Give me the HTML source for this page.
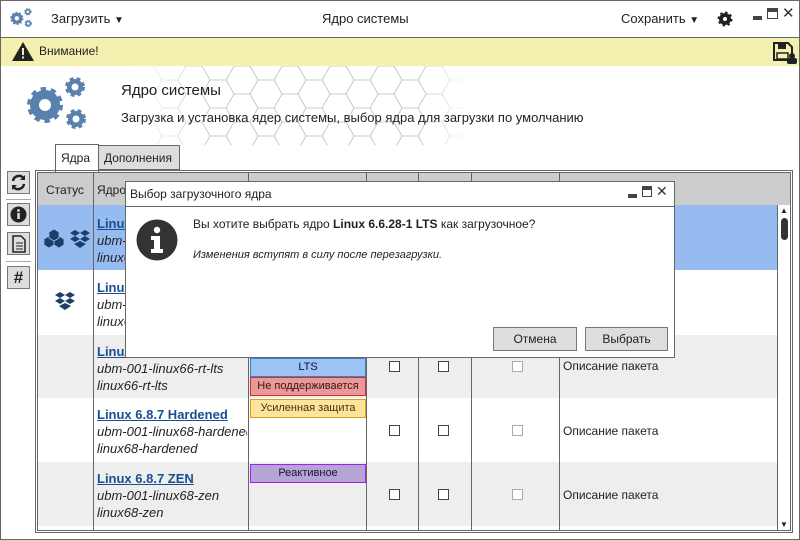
<!DOCTYPE html>
<html><head><meta charset="utf-8"><style>
*{box-sizing:border-box;margin:0;padding:0}
body{width:800px;height:540px;position:relative;overflow:hidden;background:#fff;font-family:"Liberation Sans","DejaVu Sans",sans-serif;font-size:13px;color:#222}
.a{position:absolute}
.hl{position:absolute;background:#666}
.link{color:#1a4f8f;font-weight:bold;text-decoration:underline}
.it{font-style:italic;color:#222}
.badge{position:absolute;left:250px;width:116px;height:19px;font-size:11px;text-align:center;line-height:17px;border:1px solid}
.cb{position:absolute;width:11px;height:11px;border:1px solid #444;background:#fff}
.cb.g{border-color:#aaa}
.btn{position:absolute;background:#ddd;border:1px solid #777;text-align:center;line-height:22px;font-size:13px}
.sb{position:absolute;left:7px;width:23px;height:23px;border:1px solid #777;background:#ddd}
</style></head><body>
<div class="a" style="left:0;top:0;width:800px;height:540px;border:1px solid #666"></div>
<!-- top bar -->
<svg class="a" style="left:9px;top:7px" width="26" height="22" viewBox="0 0 66 60"><g fill="#5a80ad"><circle cx="19" cy="31" r="15" stroke="#5a80ad" stroke-width="6" stroke-dasharray="5 4.5"/><circle cx="49" cy="13" r="8" stroke="#5a80ad" stroke-width="4" stroke-dasharray="3.5 3"/><circle cx="50" cy="45" r="8" stroke="#5a80ad" stroke-width="4" stroke-dasharray="3.5 3"/></g><g fill="#fff"><circle cx="19" cy="31" r="6"/><circle cx="49" cy="13" r="3.5"/><circle cx="50" cy="45" r="3.5"/></g></svg>
<div class="a" style="left:51px;top:11px">Загрузить <span style="font-size:10px">▼</span></div>
<div class="a" style="left:322px;top:11px">Ядро системы</div>
<div class="a" style="left:621px;top:11px">Сохранить <span style="font-size:10px">▼</span></div>
<svg class="a" style="left:717px;top:11px" width="16" height="16" viewBox="0 0 16 16"><circle cx="8" cy="8" r="6" fill="#222" stroke="#222" stroke-width="3" stroke-dasharray="2.2 2.5"/><circle cx="8" cy="8" r="2" fill="#fff"/></svg>
<div class="a" style="left:753px;top:16px;width:9px;height:4px;background:#444"></div>
<div class="a" style="left:767px;top:8px;width:11px;height:11px;border:1.5px solid #444;border-top-width:4px"></div>
<div class="a" style="left:782px;top:4px;font-size:15px;color:#333">✕</div>
<div class="hl" style="left:0;top:37px;width:800px;height:1px"></div>
<!-- warning bar -->
<div class="a" style="left:1px;top:38px;width:798px;height:28px;background:#f3f0b0"></div>
<svg class="a" style="left:11px;top:41px" width="24" height="21" viewBox="0 0 24 21"><path d="M12 1L23 20H1Z" fill="#222"/><rect x="11" y="7" width="2" height="7" fill="#f3f0b0"/><rect x="11" y="15.5" width="2" height="2" fill="#f3f0b0"/></svg>
<div class="a" style="left:39px;top:44px;font-size:12px">Внимание!</div>
<svg class="a" style="left:773px;top:42px" width="24" height="22" viewBox="0 0 24 22"><path d="M1 1H15L19 5V18H1Z" fill="none" stroke="#222" stroke-width="2"/><rect x="5" y="2" width="8" height="5" fill="#222"/><rect x="4" y="11" width="11" height="6" fill="none" stroke="#222" stroke-width="1.5"/><circle cx="19" cy="14" r="3" fill="#222"/><rect x="14" y="16" width="10" height="6" rx="2" fill="#222"/></svg>
<!-- header -->
<svg class="a" style="left:130px;top:66px" width="340" height="79">
<defs><pattern id="hx" width="48" height="28" patternUnits="userSpaceOnUse"><path d="M0 14L8 0H24L32 14L24 28H8Z M32 14H48" fill="none" stroke="#bbb" stroke-width="0.8"/></pattern>
<linearGradient id="fd" x1="0" x2="1"><stop offset="0" stop-color="#fff" stop-opacity="1"/><stop offset="0.25" stop-color="#fff" stop-opacity="0"/><stop offset="0.85" stop-color="#fff" stop-opacity="0"/><stop offset="1" stop-color="#fff" stop-opacity="1"/></linearGradient></defs>
<rect width="340" height="79" fill="url(#hx)"/><rect width="340" height="79" fill="url(#fd)"/></svg>
<svg class="a" style="left:26px;top:74px" width="66" height="60" viewBox="0 0 66 60"><g fill="#5a80ad"><circle cx="19" cy="31" r="15" stroke="#5a80ad" stroke-width="6" stroke-dasharray="5 4.5"/><circle cx="49" cy="13" r="8" stroke="#5a80ad" stroke-width="4" stroke-dasharray="3.5 3"/><circle cx="50" cy="45" r="8" stroke="#5a80ad" stroke-width="4" stroke-dasharray="3.5 3"/></g><g fill="#fff"><circle cx="19" cy="31" r="6"/><circle cx="49" cy="13" r="3.5"/><circle cx="50" cy="45" r="3.5"/></g></svg>
<div class="a" style="left:121px;top:82px;font-size:15px">Ядро системы</div>
<div class="a" style="left:121px;top:110px;font-size:13px">Загрузка и установка ядер системы, выбор ядра для загрузки по умолчанию</div>
<!-- tabs -->
<div class="a" style="left:55px;top:144px;width:44px;height:28px;border:1px solid #666;border-bottom:none;background:#fff;font-size:12px;padding:6px 0 0 5px">Ядра</div>
<div class="a" style="left:98px;top:145px;width:82px;height:25px;border:1px solid #666;background:#ddd;font-size:12px;padding:5px 0 0 5px">Дополнения</div>
<!-- sidebar -->
<div class="sb" style="top:171px"><svg width="21" height="21" viewBox="0 0 21 21"><path d="M5 9a6 6 0 0 1 10.5-3M16 12a6 6 0 0 1-10.5 3" fill="none" stroke="#222" stroke-width="2.5"/><path d="M17 3v5h-5zM4 18v-5h5z" fill="#222"/></svg></div>
<div class="hl" style="left:6px;top:199px;width:25px;height:1px;background:#aaa"></div>
<div class="sb" style="top:203px"><svg width="21" height="21" viewBox="0 0 21 21"><circle cx="10.5" cy="10.5" r="8" fill="#222"/><rect x="9.3" y="9" width="2.5" height="6" fill="#ddd"/><circle cx="10.5" cy="6.5" r="1.4" fill="#ddd"/></svg></div>
<div class="sb" style="top:232px"><svg width="21" height="21" viewBox="0 0 21 21"><path d="M5 3h8l4 4v12H5z" fill="none" stroke="#222" stroke-width="1.5"/><path d="M8 10h7M8 13h7M8 16h7" stroke="#222"/></svg></div>
<div class="hl" style="left:6px;top:261px;width:25px;height:1px;background:#aaa"></div>
<div class="sb" style="top:266px;font-weight:bold;font-size:17px;text-align:center;line-height:21px">#</div>
<!-- table frame -->
<div class="a" style="left:35px;top:170px;width:758px;height:363px;border:1px solid #666"></div>
<div class="a" style="left:37px;top:172px;width:754px;height:359px;border:1px solid #666;background:#fff"></div>
<div class="a" style="left:38px;top:173px;width:752px;height:32px;background:#ccc"></div>
<div class="a" style="left:38px;top:205px;width:739px;height:65px;background:#96bbf0"></div>
<div class="a" style="left:38px;top:335px;width:739px;height:63px;background:#eee"></div>
<div class="a" style="left:38px;top:462px;width:739px;height:64px;background:#eee"></div>
<div class="hl" style="left:93px;top:173px;width:1px;height:357px"></div>
<div class="hl" style="left:248px;top:173px;width:1px;height:357px"></div>
<div class="hl" style="left:366px;top:173px;width:1px;height:357px"></div>
<div class="hl" style="left:418px;top:173px;width:1px;height:357px"></div>
<div class="hl" style="left:471px;top:173px;width:1px;height:357px"></div>
<div class="hl" style="left:559px;top:173px;width:1px;height:357px"></div>
<div class="a" style="left:46px;top:183px;font-size:12px">Статус</div>
<div class="a" style="left:97px;top:183px;font-size:12px">Ядро</div>
<!-- scrollbar -->
<div class="a" style="left:777px;top:205px;width:13px;height:325px;border-left:1px solid #666;background:#fff"></div>
<div class="a" style="left:780px;top:206px;font-size:8px">▲</div>
<div class="a" style="left:781px;top:218px;width:7px;height:22px;border-radius:4px;background:#333"></div>
<div class="a" style="left:780px;top:520px;font-size:8px">▼</div>
<!-- rows -->
<svg class="a" style="left:42px;top:227px" width="52" height="24" viewBox="0 0 52 24"><g fill="#1b3f66" stroke="#96bbf0" stroke-width="0.8"><path d="M2 12l5-3 5 3v6l-5 3-5-3z"/><path d="M12 12l5-3 5 3v6l-5 3-5-3z"/><path d="M7 5l5-3 5 3v6l-5 3-5-3z"/></g><g fill="#1b3f66"><path d="M28 6l5-3 5 3-5 3zM38 6l5-3 5 3-5 3zM28 12l5-3 5 3-5 3zM38 12l5-3 5 3-5 3zM32 17l6-3 6 3-6 4z"/></g></svg>
<svg class="a" style="left:53px;top:291px" width="24" height="20" viewBox="0 0 24 20"><g fill="#1b3f66"><path d="M2 4l5-3 5 3-5 3zM12 4l5-3 5 3-5 3zM2 10l5-3 5 3-5 3zM12 10l5-3 5 3-5 3zM6 15l6-3 6 3-6 4z"/></g></svg>
<div class="a" style="left:97px;top:215px;line-height:17px"><span class="link">Linux 6.6.28-1 LTS</span><br><span class="it">ubm-001-linux66</span><br><span class="it">linux66</span></div>
<div class="a" style="left:97px;top:279px;line-height:17px"><span class="link">Linux 6.6.28</span><br><span class="it">ubm-001-linux66</span><br><span class="it">linux66</span></div>
<div class="a" style="left:97px;top:343px;line-height:17px"><span class="link">Linux 6.6.28 RT</span><br><span class="it">ubm-001-linux66-rt-lts</span><br><span class="it">linux66-rt-lts</span></div>
<div class="a" style="left:97px;top:406px;line-height:17px;width:150px;overflow:hidden;white-space:nowrap"><span class="link">Linux 6.8.7 Hardened</span><br><span class="it">ubm-001-linux68-hardened</span><br><span class="it">linux68-hardened</span></div>
<div class="a" style="left:97px;top:470px;line-height:17px"><span class="link">Linux 6.8.7 ZEN</span><br><span class="it">ubm-001-linux68-zen</span><br><span class="it">linux68-zen</span></div>
<div class="badge" style="top:358px;background:#9dc3f5;border-color:#3b7fd0;color:#113">LTS</div>
<div class="badge" style="top:377px;background:#e89a9a;border-color:#d03030;color:#411">Не поддерживается</div>
<div class="badge" style="top:399px;background:#fde49a;border-color:#d0a020;color:#431">Усиленная защита</div>
<div class="badge" style="top:464px;background:#b4a5d4;border-color:#a020f0;color:#213">Реактивное</div>
<div class="cb" style="left:389px;top:361px"></div><div class="cb" style="left:438px;top:361px"></div><div class="cb g" style="left:512px;top:361px"></div>
<div class="a" style="left:563px;top:359px;font-size:12px">Описание пакета</div>
<div class="cb" style="left:389px;top:425px"></div><div class="cb" style="left:438px;top:425px"></div><div class="cb g" style="left:512px;top:425px"></div>
<div class="a" style="left:563px;top:424px;font-size:12px">Описание пакета</div>
<div class="cb" style="left:389px;top:489px"></div><div class="cb" style="left:438px;top:489px"></div><div class="cb g" style="left:512px;top:489px"></div>
<div class="a" style="left:563px;top:488px;font-size:12px">Описание пакета</div>
<!-- dialog -->
<div class="a" style="left:125px;top:181px;width:550px;height:177px;border:1px solid #666;background:#fff"></div>
<div class="hl" style="left:126px;top:206px;width:548px;height:1px"></div>
<div class="a" style="left:130px;top:187px;font-size:12px">Выбор загрузочного ядра</div>
<div class="a" style="left:628px;top:194px;width:9px;height:4px;background:#444"></div>
<div class="a" style="left:642px;top:186px;width:10px;height:11px;border:1.5px solid #444;border-top-width:4px"></div>
<div class="a" style="left:656px;top:183px;font-size:14px;color:#333">✕</div>
<svg class="a" style="left:136px;top:219px" width="42" height="42" viewBox="0 0 42 42"><circle cx="21" cy="21" r="20.5" fill="#333"/><circle cx="21" cy="11" r="3.2" fill="#fff"/><path d="M15 17h9v13h3v4H15v-4h3v-9h-3z" fill="#fff"/></svg>
<div class="a" style="left:193px;top:217px;font-size:12px">Вы хотите выбрать ядро <b>Linux 6.6.28-1 LTS</b> как загрузочное?</div>
<div class="a" style="left:193px;top:249px;font-size:11px;font-style:italic">Изменения вступят в силу после перезагрузки.</div>
<div class="btn" style="left:493px;top:327px;width:84px;height:24px;font-size:12px">Отмена</div>
<div class="btn" style="left:585px;top:327px;width:83px;height:24px;font-size:12px">Выбрать</div>
</body></html>
